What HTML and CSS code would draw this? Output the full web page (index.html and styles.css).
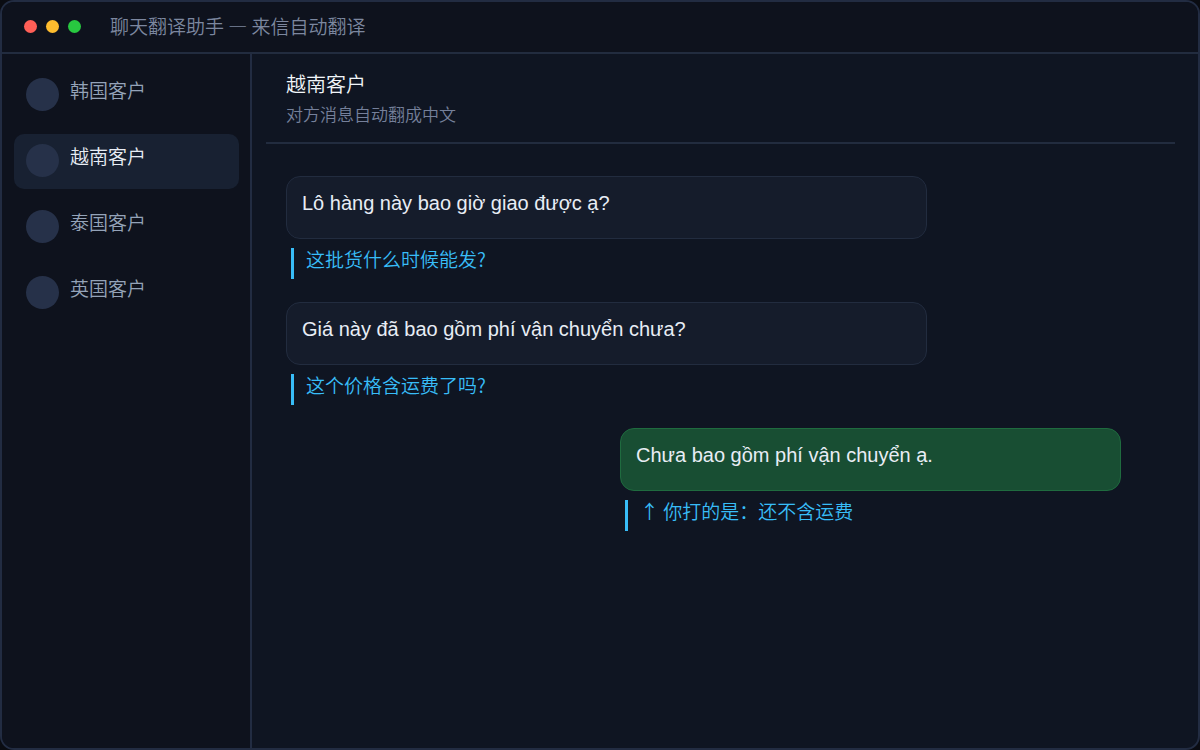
FILE: index.html
```
<!DOCTYPE html>
<html lang="zh-CN">

<head>
  <meta charset="UTF-8">
  <meta name="viewport" content="width=device-width, initial-scale=1.0">
  <title>聊天翻译助手</title>
  <link rel="stylesheet" href="styles.css">
</head>

<body>
  <div class="window">
    <header class="titlebar">
      <div class="dots">
        <span class="dot red"></span>
        <span class="dot yellow"></span>
        <span class="dot green"></span>
      </div>
      <div class="title">聊天翻译助手 — 来信自动翻译</div>
    </header>

    <div class="content">
      <nav class="sidebar">
        <button class="contact"><span class="avatar"></span>韩国客户</button>
        <button class="contact active"><span class="avatar"></span>越南客户</button>
        <button class="contact"><span class="avatar"></span>泰国客户</button>
        <button class="contact"><span class="avatar"></span>英国客户</button>
      </nav>

      <main class="chat">
        <div class="chat-header">
          <h1>越南客户</h1>
          <p>对方消息自动翻成中文</p>
        </div>

        <div class="messages">
          <div class="message">
            <div class="bubble" lang="vi">Lô hàng này bao giờ giao được ạ?</div>
            <div class="translation">这批货什么时候能发?</div>
          </div>
          <div class="message">
            <div class="bubble" lang="vi">Giá này đã bao gồm phí vận chuyển chưa?</div>
            <div class="translation">这个价格含运费了吗?</div>
          </div>
          <div class="message out">
            <div class="bubble" lang="vi">Chưa bao gồm phí vận chuyển ạ.</div>
            <div class="translation">↑ 你打的是：还不含运费</div>
          </div>
        </div>
      </main>
    </div>
  </div>
</body>

</html>
```
FILE: styles.css
```
* {
  box-sizing: border-box;
}

body {
  margin: 0;
  background-color: #0a0c12;
  font-family: "Noto Sans CJK SC", sans-serif;
  font-weight: 350;
}

.window {
  display: flex;
  flex-direction: column;
  min-height: 100vh;
  border: 2px solid #222c42;
  border-radius: 14px;
  background-color: #0f1522;
  overflow: hidden;
}

.titlebar {
  display: flex;
  align-items: center;
  gap: 29px;
  height: 52px;
  padding: 0 22px 2px;
  background-color: #0e121d;
  border-bottom: 2px solid #222c3f;
}

.dots {
  display: flex;
  gap: 9px;
}

.dot {
  width: 13px;
  height: 13px;
  border-radius: 50%;
}

.red {
  background-color: #ff5f57;
}

.yellow {
  background-color: #febc2e;
}

.green {
  background-color: #28c840;
}

.title {
  font-size: 19px;
  line-height: 28px;
  color: #7c879f;
}

.content {
  display: flex;
  flex: 1;
}

.sidebar {
  display: flex;
  flex-direction: column;
  gap: 11px;
  flex: 0 0 250px;
  padding: 14px 11px 14px 12px;
  background-color: #0e121d;
  border-right: 2px solid #222c42;
}

.contact {
  display: flex;
  align-items: flex-start;
  gap: 11px;
  padding: 10px 12px 12px;
  border: none;
  border-radius: 10px;
  background-color: transparent;
  font-family: inherit;
  font-size: 19px;
  font-weight: inherit;
  line-height: 24px;
  color: #94a3b8;
  text-align: left;
  cursor: pointer;
}

.contact.active {
  background-color: #182132;
  color: #e8edf5;
}

.avatar {
  width: 33px;
  height: 33px;
  border-radius: 50%;
  background-color: #263149;
}

.chat {
  flex: 1;
  min-width: 0;
  padding: 16px 23px 24px 14px;
}

.chat-header {
  padding: 0 20px 12px;
  border-bottom: 2px solid #222c3f;
}

.chat-header h1 {
  margin: 0;
  font-size: 20px;
  font-weight: inherit;
  line-height: 28px;
  color: #f1f5f9;
}

.chat-header p {
  margin: 0;
  font-size: 17px;
  line-height: 32px;
  color: #75809a;
}

.messages {
  display: flex;
  flex-direction: column;
  gap: 23px;
  padding: 32px 54px 0 20px;
}

.message {
  width: 641px;
  max-width: 100%;
}

.message.out {
  width: 501px;
  align-self: flex-end;
}

.bubble {
  min-height: 63px;
  padding: 12px 15px 20px;
  border: 1px solid #222c3f;
  border-radius: 14px;
  background-color: #151c2b;
  font-family: "Liberation Sans", Arial, sans-serif;
  font-size: 20px;
  font-weight: 400;
  line-height: 29px;
  color: #e8edf5;
}

.out .bubble {
  border-color: #1f6b3f;
  background-color: #184e33;
}

.translation {
  margin: 9px 0 0 5px;
  padding: 0 12px 9px;
  border-left: 3px solid #38bdf8;
  font-size: 19px;
  line-height: 22px;
  color: #38bdf8;
}
```
